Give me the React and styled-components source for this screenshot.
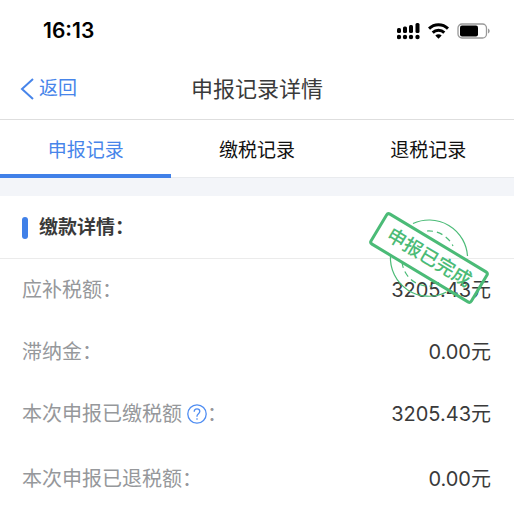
import React from 'react';
import styled, { createGlobalStyle } from 'styled-components';

const GlobalStyle = createGlobalStyle`
    * {
        box-sizing: border-box;
    }

    body {
        margin: 0;
        background: #fff;
        color: #3a3a3a;
        font-family: Inter, "Noto Sans CJK SC", sans-serif;
        font-size: 20px;
        line-height: 28px;
    }

    button {
        border: 0;
        padding: 0;
        background: none;
        font: inherit;
        cursor: pointer;
    }
`;

const StatusBar = styled.div`
    display: flex;
    align-items: center;
    justify-content: space-between;
    height: 60px;
    padding: 2px 24px 0 43px;
    color: #000;
    font-size: 21px;
    font-weight: 600;
`;

const StatusIcons = styled.div`
    display: flex;
    align-items: center;
    gap: 8px;

    svg {
        display: block;
    }
`;

const NavBar = styled.header`
    display: grid;
    grid-template-columns: 1fr auto 1fr;
    align-items: center;
    height: 60px;
    padding: 0 20px 2px;
    border-bottom: 1px solid #dedede;
`;

const BackButton = styled.button`
    display: flex;
    align-items: center;
    gap: 5px;
    color: #4785ea;
    font-size: 19px;
`;

const Title = styled.h1`
    margin: 0;
    font-size: 22px;
    font-weight: 400;
`;

const Tabs = styled.nav`
    display: grid;
    grid-template-columns: repeat(3, 1fr);
    height: 58px;
    border-bottom: 1px solid #e9ebee;
`;

const Tab = styled.button`
    && {
        height: 58px;
        padding-top: 8px;
        border-bottom: 4px solid ${({ $active }) => ($active ? '#4080e8' : 'transparent')};
        color: ${({ $active }) => ($active ? '#4785ea' : '#111')};
        font-size: 19px;
    }
`;

const Divider = styled.div`
    height: 18px;
    background: #f3f5f9;
`;

const Section = styled.section`
    position: relative;
`;

const SectionTitle = styled.h2`
    display: flex;
    align-items: center;
    gap: 11px;
    height: 63px;
    margin: 0;
    padding: 2px 22px 0;
    border-bottom: 1px solid #ebebeb;
    font-size: 19px;
    font-weight: 700;

    &::before {
        content: "";
        width: 6px;
        height: 22px;
        border-radius: 3px;
        background: #4080e8;
    }
`;

const List = styled.dl`
    display: grid;
    gap: 34px;
    margin: 0;
    padding: 17px 23px 12px 22px;
`;

const Row = styled.div`
    display: flex;
    justify-content: space-between;
    padding-bottom: ${({ $spaced }) => ($spaced ? '3px' : '0')};
`;

const Label = styled.dt`
    display: flex;
    align-items: center;
    color: #96989b;
`;

const Value = styled.dd`
    margin: 0;
`;

const HelpButton = styled.button`
    display: flex;
    margin-left: 5px;
    color: #4f8df2;
`;

const Stamp = styled.div`
    position: absolute;
    top: 14px;
    right: 25px;
    display: grid;
    place-items: center;
    width: 121px;
    height: 96px;
    color: #4bbb77;
    pointer-events: none;

    > * {
        grid-area: 1 / 1;
    }
`;

const StampText = styled.span`
    width: 120px;
    height: 38px;
    border: 3px solid currentColor;
    border-radius: 4px;
    font-size: 19px;
    font-weight: 500;
    line-height: 32px;
    text-align: center;
    transform: rotate(31deg);
`;

const SignalIcon = () => (
    <svg width="23" height="18" viewBox="0 0 23 18" fill="currentColor" aria-hidden="true">
        <rect x="0" y="6" width="4" height="5" rx="1.5" />
        <rect x="6" y="4.5" width="4" height="6.5" rx="1.5" />
        <rect x="12" y="3" width="4" height="8" rx="1.5" />
        <rect x="18.5" y="1" width="4" height="10" rx="1.5" />
        <circle cx="2" cy="15" r="2.2" />
        <circle cx="8" cy="15" r="2.2" />
        <circle cx="14" cy="15" r="2.2" />
        <circle cx="20.5" cy="15" r="2.2" />
    </svg>
);

const WifiIcon = () => (
    <svg width="21" height="16" viewBox="0 0 21 16" fill="none" stroke="currentColor" strokeWidth="3" aria-hidden="true">
        <path d="M1 5.600C6.300.4 14.700.4 20 5.600" />
        <path d="M4.700 9.600c3.200-3 8.400-3 11.600 0" />
        <path d="M7.300 12.400c1.800-1.600 4.600-1.600 6.400 0L10.500 15.800z" fill="currentColor" stroke="none" />
    </svg>
);

const BatteryIcon = () => (
    <svg width="33" height="16" viewBox="0 0 33 16" aria-hidden="true">
        <rect x="1" y="1" width="28.5" height="14" rx="4" fill="none" stroke="#999" strokeWidth="1.3" />
        <rect x="3" y="2.5" width="18" height="11" rx="2" fill="#000" />
        <path d="M31 5.500v5c1-.4 1.700-1.400 1.700-2.500S32 5.900 31 5.500z" fill="#999" />
    </svg>
);

const BackIcon = () => (
    <svg width="14" height="22" viewBox="0 0 14 22" fill="none" stroke="currentColor" strokeWidth="2" aria-hidden="true">
        <path d="M13 1L2 11l11 10" />
    </svg>
);

const HelpIcon = () => (
    <svg width="20" height="20" viewBox="0 0 20 20" fill="none" stroke="currentColor" strokeWidth="1.3" aria-hidden="true">
        <circle cx="10" cy="10" r="9.2" />
        <path d="M7.200 7.800c0-1.800 1.200-2.900 2.800-2.900s2.800 1 2.800 2.600c0 2-2.800 2.300-2.800 4.500v.7" />
        <path d="M10 14.200v1.600" />
    </svg>
);

const StampCircle = () => (
    <svg width="80" height="80" viewBox="0 0 80 80" fill="none" stroke="currentColor" strokeWidth="1.2" aria-hidden="true">
        <path d="M24 5.500a38.500 38.500 0 0 1 54.500 32.500" />
        <path d="M1.500 37a38.500 38.500 0 0 0 56 37" />
        <path d="M38 13a27 27 0 0 1 26 15" strokeDasharray="6 4" />
        <path d="M13 44a27 27 0 0 0 30 24" strokeDasharray="6 4" />
    </svg>
);

const tabs = ['申报记录', '缴税记录', '退税记录'];

const rows = [
    { label: '应补税额', value: '3205.43元' },
    { label: '滞纳金', value: '0.00元' },
    { label: '本次申报已缴税额', value: '3205.43元', help: true },
    { label: '本次申报已退税额', value: '0.00元' },
];

const App = () => {
    const [active, setActive] = React.useState(0);

    return (
        <>
            <GlobalStyle />
            <StatusBar>
                <span>16:13</span>
                <StatusIcons>
                    <SignalIcon />
                    <WifiIcon />
                    <BatteryIcon />
                </StatusIcons>
            </StatusBar>
            <NavBar>
                <BackButton type="button">
                    <BackIcon />
                    返回
                </BackButton>
                <Title>申报记录详情</Title>
            </NavBar>
            <Tabs>
                {tabs.map((tab, i) => (
                    <Tab key={tab} type="button" $active={i === active} onClick={() => setActive(i)}>{tab}</Tab>
                ))}
            </Tabs>
            <Divider />
            <Section>
                <SectionTitle>缴款详情：</SectionTitle>
                <List>
                    {rows.map(({ label, value, help }) => (
                        <Row key={label} $spaced={help}>
                            <Label>
                                {label}
                                {help && <HelpButton type="button" aria-label="说明"><HelpIcon /></HelpButton>}
                                ：
                            </Label>
                            <Value>{value}</Value>
                        </Row>
                    ))}
                </List>
                <Stamp>
                    <StampCircle />
                    <StampText>申报已完成</StampText>
                </Stamp>
            </Section>
        </>
    );
};

export default App;
